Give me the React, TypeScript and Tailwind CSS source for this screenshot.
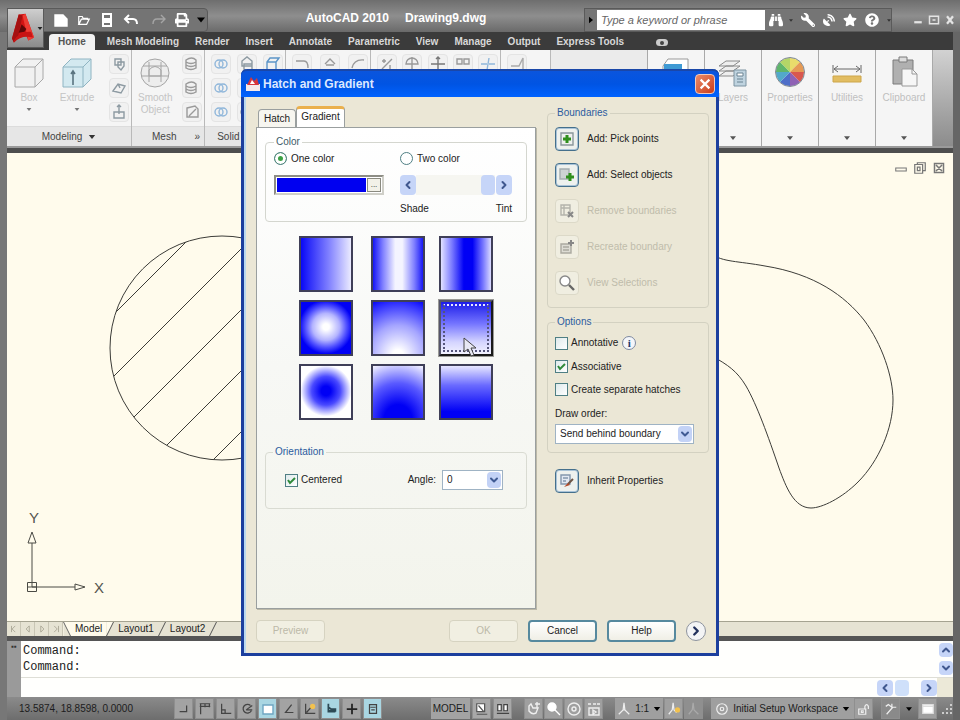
import { useState } from 'react'
import type { ReactNode } from 'react'
import { ChevronDown, ChevronLeft, ChevronRight, ChevronUp } from 'lucide-react'
import { FaBinoculars, FaPrint, FaQuestionCircle, FaSatelliteDish, FaStar, FaWrench } from 'react-icons/fa'

const MENU = ['Home', 'Mesh Modeling', 'Render', 'Insert', 'Annotate', 'Parametric', 'View', 'Manage', 'Output', 'Express Tools']

const B = '#0000f5'
const GRADIENTS = [
  { name: 'Linear', bg: `linear-gradient(90deg, ${B}, #8080ff 55%, #f4f4ff)` },
  { name: 'Cylinder', bg: `linear-gradient(90deg, ${B}, #8080ff 22%, #f4f4ff 45%, #f4f4ff 58%, #8080ff 80%, ${B})` },
  { name: 'Inverted cylinder', bg: `linear-gradient(90deg, #f4f4ff, #7a7aff 24%, ${B} 46%, ${B} 62%, #7a7aff 82%, #f4f4ff)` },
  { name: 'Spherical', bg: `radial-gradient(circle at 50% 48%, #ffffff 8%, #b4b4ff 34%, #5050ff 52%, ${B} 68%)` },
  { name: 'Hemispherical', bg: `radial-gradient(ellipse 105% 110% at 50% 100%, #ffffff 10%, #a5a5ff 50%, #2a2aff 88%, ${B})` },
  { name: 'Curved', bg: 'linear-gradient(180deg, #1414e6, #7474ff 42%, #d4d4ff 75%, #f8f8ff)' },
  { name: 'Inverted spherical', bg: `radial-gradient(circle at 50% 48%, ${B} 12%, #4a4aff 36%, #a5a5ff 50%, #ffffff 64%)` },
  { name: 'Inverted hemispherical', bg: `radial-gradient(ellipse 105% 110% at 50% 100%, ${B} 25%, #5a5aff 60%, #ffffff)` },
  { name: 'Inverted curved', bg: `linear-gradient(180deg, #f4f4ff, #6a6aff 38%, ${B} 85%)` },
]

type IconProps = { d: string; className?: string; children?: ReactNode }

function Icon({ d, className = 'size-4', children }: IconProps) {
  return (
    <svg viewBox="0 0 16 16" className={`shrink-0 ${className}`} fill="none" stroke="currentColor" strokeWidth="1.4" aria-hidden="true">
      <path d={d} />
      {children}
    </svg>
  )
}

function Caret({ className = 'h-1 w-2 text-black' }: { className?: string }) {
  return (
    <svg viewBox="0 0 8 5" className={`shrink-0 ${className}`} fill="currentColor" aria-hidden="true">
      <path d="M0 0h8L4 5z" />
    </svg>
  )
}

function AppLogo() {
  return (
    <svg viewBox="0 0 24 32" className="h-8 w-6" aria-hidden="true">
      <path d="M7 2 14 1 23 26 17 29 14 22 7 25 2 31 0 27z" fill="#d21414" />
      <path d="M7 2 11 3 6 27 2 31 0 27z" fill="#a51010" />
      <path d="M11 3 14 1 23 26 17 29z" fill="#ee3b33" />
      <path d="M10 12 15 17 13 20 7 21z" fill="#5e0808" />
      <path d="M2 29Q8 19 20 20L22 26Q10 23 2 31z" fill="#c81414" />
    </svg>
  )
}

function TitleBar() {
  return (
    <header className="flex h-8 items-end bg-gradient-to-b from-[#6e6e6e] via-[#8e8e8e] to-[#6a6a6a] pr-1">
      <div className="ml-9 flex h-6 w-[172px] items-center gap-2 rounded-r border border-[#5a5a5a] bg-[#747474] pr-1 pl-4 text-white">
        <button aria-label="New"><Icon d="M2 3h8l4 4v7H2z" className="size-4 fill-white" /></button>
        <button aria-label="Open"><Icon d="M2 13V4h4l1 2h5v2M2 13l3-6h9l-3 6z" className="size-3.5" /></button>
        <button aria-label="Save"><Icon d="M4 2h8v5H4zM4 10h8v4H4z" className="size-4 stroke-2"><path d="M3 8h10" /></Icon></button>
        <button aria-label="Undo"><Icon d="M6 3 2 7l4 4M2 7h8q4 0 4 5" className="size-4 stroke-2" /></button>
        <button aria-label="Redo" className="pl-1 text-[#a5a5a5]"><Icon d="M10 3l4 4-4 4M14 7H6q-4 0-4 5" className="size-4" /></button>
        <button aria-label="Print"><FaPrint className="size-3.5" /></button>
        <button aria-label="Customize"><Caret className="h-1.5 w-2 text-black" /></button>
      </div>
      <h1 className="flex flex-1 justify-center gap-4 self-center pt-1 text-xs font-bold text-white">
        <span>AutoCAD 2010</span>
        <span>Drawing9.dwg</span>
      </h1>
      <div className="mr-5 flex h-6 items-center border border-[#5a5a5a] bg-[#757575] pl-1 text-white">
        <svg viewBox="0 0 5 8" className="mr-1 h-2 w-1" aria-hidden="true"><path d="M0 0l5 4-5 4z" /></svg>
        <input aria-label="Search" placeholder="Type a keyword or phrase" className="h-5 w-[168px] bg-white px-1 text-[11px] italic text-gray-700 placeholder:text-[#666]" />
        <div className="flex items-center gap-2 pl-1">
          <button aria-label="Find" className="flex items-center gap-1.5"><FaBinoculars className="size-3.5" /><Caret className="h-[3px] w-1 text-[#333]" /></button>
          <button aria-label="Subscription"><FaWrench className="size-3.5 -scale-x-100" /></button>
          <button aria-label="Communication center"><FaSatelliteDish className="size-3" /></button>
          <button aria-label="Favorites"><FaStar className="size-3.5" /></button>
          <button aria-label="Help" className="flex items-center gap-2"><FaQuestionCircle className="size-3.5" /><Caret className="h-[3px] w-1 text-[#333]" /></button>
        </div>
      </div>
      <div className="flex h-6 items-center gap-1 text-[#e4e4e4]">
        <button aria-label="Minimize"><Icon d="M3 11h10" className="size-3 stroke-[3]" /></button>
        <button aria-label="Restore"><Icon d="M2 3h12v10H2zM6 8h4" className="size-3 stroke-2" /></button>
        <button aria-label="Close window"><Icon d="M4 3l8 10M12 3 4 13" className="size-3 stroke-[3]" /></button>
      </div>
    </header>
  )
}

function MenuTabs() {
  return (
    <nav className="flex h-[18px] items-end bg-[#3b3b3b] pl-[42px] text-[10px] leading-4 font-bold text-[#d8d8d8]">
      {MENU.map((m, i) => (
        <a key={m} href="#" className={i === 0 ? 'mr-1 h-4 rounded-t-sm bg-[#f2f2f2] px-[9px] text-[#555]' : 'px-2'}>{m}</a>
      ))}
      <button aria-label="Minimize ribbon" className="mb-1 ml-6 flex h-[7px] w-3 items-center justify-center rounded-sm bg-[#ccc]">
        <span className="size-1 rounded-full bg-[#444]" />
      </button>
    </nav>
  )
}

function Cube({ blue = false }: { blue?: boolean }) {
  return (
    <svg viewBox="0 0 30 32" className="h-8 w-8" fill={blue ? '#d3e9f0' : '#f1f1f1'} stroke={blue ? '#8fb4c2' : '#a8a8a8'} aria-hidden="true">
      <path d="M1 10 9 2h20v20l-8 8H1z" />
      <path d="M1 10h20v20M21 10l8-8" fill="none" />
      {blue && <path d="M11 14v14M9 17l2-3 2 3" stroke="#5a7480" strokeWidth="1.6" />}
    </svg>
  )
}

const S_COPY = 'M4 3h6v6H4zM7 6h6v4l-3 4-3-3z'
const S_PLANE = 'M2 11 7 4l7 2-4 7zM7 4l2 4'
const S_PULL = 'M3 8h10v6H3zM8 10V1M6 3l2-2 2 2'
const S_SPHERE = 'M2 4q6-4 10 0v8q-5 3-10 0zM2 6q5 3 10 0M2 9q5 3 10 0'
const S_UNION = 'M6 4a4 4 0 1 0 0 8a4 4 0 1 0 0-8M10 4a4 4 0 1 0 0 8a4 4 0 1 0 0-8'

function RibbonPanel({ label, className, children }: { label?: ReactNode; className: string; children?: ReactNode }) {
  return (
    <section className={`flex shrink-0 flex-col border-r border-[#b9b9b9] ${className}`}>
      <div className="flex flex-1 justify-between pt-1 pr-0.5 pl-1.5">{children}</div>
      <div className="flex h-5 items-center justify-center gap-1.5 border-t border-[#dcdcdc] bg-[#e6e6e6] text-[10px] text-[#444]">{label}</div>
    </section>
  )
}

function BigTool({ label, icon, menu }: { label: string; icon: ReactNode; menu?: boolean }) {
  return (
    <button className="flex flex-col items-center self-start text-[10px] leading-3 text-[#c4c4c4]">
      <span className="flex h-[38px] items-center">{icon}</span>
      <span className="w-min">{label}</span>
      {menu && <Caret className="mt-1 h-[3px] w-1.5 text-[#777]" />}
    </button>
  )
}

function ToolStack({ paths, color }: { paths: string[]; color: string }) {
  return (
    <div className={`flex flex-col gap-1 ${color}`}>
      {paths.map((d, i) => (
        <button key={i} aria-label="Tool" className="flex size-5 items-center justify-center rounded-sm border border-[#e4e4e4] bg-[#f1f1f1]">
          <Icon d={d} className="size-4" />
        </button>
      ))}
    </div>
  )
}

function SidePanel({ label, icon }: { label: string; icon: ReactNode }) {
  return (
    <section className="flex w-[57px] shrink-0 flex-col items-center border-r border-[#a9a9a9] pt-1 text-[10px] leading-3 text-[#bfbfbf]">
      <div className="flex h-9 items-center">{icon}</div>
      <span className="pt-0.5">{label}</span>
      <button aria-label={`${label} menu`} className="mt-auto flex h-4 items-center"><Caret className="h-1 w-1.5 text-[#555]" /></button>
    </section>
  )
}

function ColorWheel() {
  const colors = ['#e9dc6b', '#e59a55', '#d9584f', '#8f62b5', '#4e6ec8', '#52a9c9', '#5fb56b', '#b4d567']
  return (
    <svg viewBox="-16 -16 32 32" className="size-8" aria-hidden="true">
      {colors.map((c, i) => (
        <path key={c} d="M0 0V-14A14 14 0 0 1 9.9 -9.9z" fill={c} transform={`rotate(${i * 45})`} />
      ))}
      <circle r="14.5" fill="none" stroke="#7d8791" />
    </svg>
  )
}

function Ribbon() {
  return (
    <div className="flex h-[98px] overflow-hidden border-b-2 border-[#9a9a9a] bg-[#f5f5f5]">
      <RibbonPanel className="w-[125px]" label={<>Modeling <Caret className="h-1 w-2 text-[#333]" /></>}>
        <BigTool label="Box" icon={<Cube />} menu />
        <BigTool label="Extrude" icon={<Cube blue />} menu />
        <ToolStack paths={[S_COPY, S_PLANE, S_PULL]} color="text-[#8d9aa2]" />
      </RibbonPanel>
      <RibbonPanel className="w-[73px]" label={<span className="flex w-full justify-between pr-1 pl-5"><span>Mesh</span><span>»</span></span>}>
        <BigTool
          label="Smooth Object"
          icon={
            <svg viewBox="0 0 32 32" className="size-8" fill="#ededed" stroke="#a5a5a5" aria-hidden="true">
              <circle cx="16" cy="16" r="14" />
              <path d="M4 9h24M2 19h28M10 5v20M22 5v20M10 13q6-7 12 0v6H10z" />
            </svg>
          }
        />
        <ToolStack paths={[S_SPHERE, S_SPHERE, 'M3 4l8-2 3 3v8H3zM5 12l7-7']} color="text-[#9a9a9a]" />
      </RibbonPanel>
      <RibbonPanel className="w-[81px]" label="Solid Editing">
        <ToolStack paths={[S_UNION, S_UNION, S_UNION]} color="text-[#8fb6da]" />
        <ToolStack paths={['M3 5l5-4 5 4v5H3zM5 8h8v6H5z', S_COPY, S_UNION]} color="text-[#8d9aa2]" />
        <ToolStack paths={['M2 6l3-4h9l-3 4v8H2zM2 6h9', S_PLANE, S_PULL]} color="text-[#5c95c8]" />
      </RibbonPanel>
      <RibbonPanel className="w-[85px]" label="Draw">
        <ToolStack paths={['M2 5h8q4 0 4 7', S_PLANE, S_PULL]} color="text-[#999]" />
        <ToolStack paths={['M3 8l5-5 5 5M4 9h8', S_PLANE, S_PULL]} color="text-[#999]" />
        <ToolStack paths={['M2 12q2-9 12-8', S_PLANE, S_PULL]} color="text-[#999]" />
      </RibbonPanel>
      <RibbonPanel className="w-[130px]" label="Modify">
        <ToolStack paths={['M3 13 13 3M5 3v4M3 5h4M11 9v4', S_PLANE, S_PULL]} color="text-[#999]" />
        <ToolStack paths={['M8 1v14M2 8a6 6 0 0 1 12 0z', S_PLANE, S_PULL]} color="text-[#999]" />
        <ToolStack paths={['M8 1v14M1 8h14M6 3l2-2 2 2', S_PLANE, S_PULL]} color="text-[#777]" />
        <ToolStack paths={['M2 3h5v5H2zM9 3h5v5H9z', S_PLANE, S_PULL]} color="text-[#999]" />
        <ToolStack paths={['M1 8h6M9 8h6M9 2 7 14', S_PLANE, S_PULL]} color="text-[#8fb6da]" />
      </RibbonPanel>
      <RibbonPanel className="w-[50px]" label="Section">
        <ToolStack paths={['M2 10h8l4-8v12', S_PLANE, S_PULL]} color="text-[#aaa]" />
      </RibbonPanel>
      <div className="min-w-0 flex-1 border-r border-[#a9a9a9] bg-[#ebebeb]" />
      <SidePanel
        label="View"
        icon={<svg viewBox="0 0 32 32" className="size-8" fill="#fff" stroke="#999" aria-hidden="true"><path d="M3 10 8 3h20v20H3z" /><path d="M4 8h18v5H4z" fill="#3f9ad4" stroke="none" /></svg>}
      />
      <SidePanel
        label="Layers"
        icon={
          <svg viewBox="0 0 32 32" className="size-8" fill="#eee" stroke="#8a8a8a" aria-hidden="true">
            <path d="M2 20 9 15h14l-7 5zM2 15 9 10h14l-7 5zM2 10 9 5h14l-7 5z" />
            <path d="M17 14h12v16H17z" fill="#bfd3df" stroke="#7d93a1" />
            <path d="M20 17h6v3h-6zM20 23h6M20 26h6" fill="#fff" stroke="#6b8392" />
          </svg>
        }
      />
      <SidePanel label="Properties" icon={<ColorWheel />} />
      <SidePanel
        label="Utilities"
        icon={
          <svg viewBox="0 0 32 32" className="size-8" aria-hidden="true">
            <path d="M2 9v8M30 9v8M3 13h26M7 10l-4 3 4 3M25 10l4 3-4 3" fill="none" stroke="#666" />
            <path d="M2 20h28v6H2z" fill="#e2bd62" stroke="#cda64b" />
          </svg>
        }
      />
      <SidePanel
        label="Clipboard"
        icon={
          <svg viewBox="0 0 32 32" className="size-8" fill="#b0b0b0" stroke="#7a7a7a" aria-hidden="true">
            <path d="M5 4h20v24H5z" />
            <path d="M11 1h8v5h-8z" fill="#ddd" />
            <path d="M14 13h10l5 5v12H14z" fill="#f6f6f6" stroke="#999" />
            <path d="M24 13v5h5" fill="none" stroke="#999" />
          </svg>
        }
      />
      <div className="w-5 shrink-0 bg-gradient-to-b from-[#d2d2d2] to-[#8c8c8c]" />
    </div>
  )
}

function Drawing() {
  return (
    <svg viewBox="7 153 946 468" className="absolute inset-0 h-full w-full" fill="none" stroke="#3c3c38" aria-label="Drawing">
      <defs>
        <clipPath id="disc"><circle cx="222" cy="348" r="112" /></clipPath>
      </defs>
      <circle cx="222" cy="348" r="112" />
      <g clipPath="url(#disc)">
        {[428, 490, 551, 612, 673].map(c => (
          <path key={c} d={`M${c - 480} 480 ${c - 220} 220`} />
        ))}
      </g>
      <path d="M712 254C722 262 738 261 765 266C815 274 845 296 864 320C882 344 893 377 893 400C893 428 879 461 858 482C842 498 822 508 811 508C794 508 786 487 779 468C768 436 757 405 746 386C737 371 728 365 712 356" />
      <g stroke="#4a4a45">
        <path d="M27.500 582.500h9v9h-9zM32 587V543M32 587h43M28 543l4-11 4 11zM75 584l10 3-10 3z" />
        <path d="M28 587h9" />
      </g>
      <g fill="#55554f" stroke="none" fontSize="15">
        <text x="29" y="523">Y</text>
        <text x="94" y="593">X</text>
      </g>
    </svg>
  )
}

function CanvasArea() {
  return (
    <main className="relative min-h-[300px] flex-1 bg-[#fffbec]">
      <Drawing />
      <div className="absolute top-2 right-2 flex items-center gap-1.5 text-[#777]">
        <button aria-label="Minimize drawing"><Icon d="M1 8h14v4H1z" className="size-3" /></button>
        <button aria-label="Restore drawing"><Icon d="M2 4h9v10H2zM5 4V2h9v9h-3M5 7h3v4H5z" className="size-3.5" /></button>
        <button aria-label="Close drawing"><Icon d="M2 2h12v12H2zM4 4l8 8M12 4l-8 8" className="size-3 stroke-2" /></button>
      </div>
    </main>
  )
}

function LayoutTabs() {
  return (
    <div className="flex h-[15px] items-stretch border-t border-[#a5a391] bg-[#e6e3d3] text-[10px] leading-[14px] text-[#222]">
      {['M10 3 5 8l5 5M4 3v10', 'M10 3 5 8l5 5z', 'M6 3l5 5-5 5z', 'M5 3l5 5-5 5M12 3v10'].map((d, i) => (
        <button key={i} aria-label={`Scroll layouts ${i + 1}`} className="flex w-[14px] items-center justify-center border-r border-[#c9c6b5] text-[#a8a594]">
          <Icon d={d} className="size-2.5" />
        </button>
      ))}
      <div className="flex">
        <svg viewBox="0 0 7 14" className="h-3.5 w-2 bg-[#fffbec]" aria-hidden="true"><path d="M0 0v14h7z" fill="#e6e3d3" /><path d="M0 0l7 14" stroke="#666" /></svg>
        <a href="#" className="bg-[#fffbec] px-1">Model</a>
        <svg viewBox="0 0 7 14" className="mr-1 h-3.5 w-2" aria-hidden="true"><path d="M0 0h7L0 14z" fill="#fffbec" /><path d="M7 0 0 14" stroke="#555" /></svg>
        {['Layout1', 'Layout2'].map(l => (
          <a key={l} href="#" className="flex">
            {l}
            <svg viewBox="0 0 7 14" className="mr-1 ml-1 h-3.5 w-2" aria-hidden="true"><path d="M7 0 0 14" stroke="#555" /></svg>
          </a>
        ))}
      </div>
    </div>
  )
}

const SCROLL_BTN = 'flex items-center justify-center rounded-sm bg-[#c6d5f8] text-[#40588f]'

function CommandLine() {
  return (
    <div className="flex h-14 bg-[#fffffd]">
      <div className="w-3.5 shrink-0 bg-[#9a9a9a] pt-1 text-center text-[8px] leading-[4px] text-[#333]">▪▪</div>
      <div className="flex min-w-0 flex-1 flex-col">
        <div className="flex h-[37px] border-b border-[#deded6]">
          <div className="flex-1 pt-0.5 pl-0.5 font-['Liberation_Mono',monospace] text-xs leading-4 text-[#222]">
            <p>Command:</p>
            <p>Command:</p>
          </div>
          <div className="flex w-3.5 flex-col justify-between py-0.5">
            <button aria-label="Scroll up" className={`${SCROLL_BTN} h-3.5`}><ChevronUp className="size-3" strokeWidth={4} /></button>
            <button aria-label="Scroll down" className={`${SCROLL_BTN} h-3.5`}><ChevronDown className="size-3" strokeWidth={4} /></button>
          </div>
        </div>
        <div className="flex flex-1">
          <input aria-label="Command input" className="min-w-0 flex-1 font-['Liberation_Mono',monospace] text-xs outline-none" />
          <div className="flex w-[60px] items-center py-px">
            <button aria-label="Scroll left" className={`${SCROLL_BTN} h-4 w-4`}><ChevronLeft className="size-3" strokeWidth={4} /></button>
            <span className="ml-0.5 h-4 w-3.5 rounded-sm bg-[#cfe0fa]" />
            <button aria-label="Scroll right" className={`${SCROLL_BTN} ml-auto h-4 w-4`}><ChevronRight className="size-3" strokeWidth={4} /></button>
          </div>
          <div className="w-4 bg-[#ece9d8]" />
        </div>
      </div>
    </div>
  )
}

const TOGGLES = [
  { name: 'Snap', d: 'M11 4v7H3M4 11h2', on: false },
  { name: 'Grid', d: 'M2 2h12M2 5h12M3 2v12M8 2v4M13 2v4', on: false },
  { name: 'Ortho', d: 'M3 2v11h11M3 9h4v4', on: false },
  { name: 'Polar', d: 'M12 4a5 5 0 1 0 1 6M7 9l7-5M7 9h7', on: false },
  { name: 'Object snap', d: 'M3 4h10v9H3z', on: true },
  { name: 'Object snap tracking', d: 'M11 3 4 12h9', on: false },
  { name: 'Dynamic UCS', d: 'M3 2v11h11M4 12l7-8', on: false },
  { name: 'Dynamic input', d: 'M5 2v9h8M5 6l3 2h5v2H6', on: true },
  { name: 'Lineweight', d: 'M8 2v12M2 8h12M8 8h6', on: false },
  { name: 'Quick properties', d: 'M4 3h8v10H4zM5 6h6M6 9h4', on: true },
]

const TOGGLE_ICON: Record<string, string> = {
  'Object snap': 'size-4 fill-white stroke-[#6fa6c2]',
  'Lineweight': 'size-3.5 stroke-2 text-[#222]',
  'Dynamic input': 'size-3.5 stroke-2 text-[#2d4a55]',
}

const ST_BTN = 'flex h-[21px] w-[19px] shrink-0 items-center justify-center border border-[#8f8f8f]'

function StatusBar() {
  return (
    <footer className="flex h-[23px] items-center bg-gradient-to-b from-[#8b8b8b] to-[#6d6d6d] text-[10px] text-[#1c1c1c]">
      <span className="w-[167px] shrink-0 pl-3">13.5874, 18.8598, 0.0000</span>
      <div className="flex gap-0.5">
        {TOGGLES.map(t => (
          <button key={t.name} aria-label={t.name} aria-pressed={t.on} className={`${ST_BTN} ${t.on ? 'bg-[#a9d6e2]' : 'bg-[#a3a3a3]'} text-[#444]`}>
            <Icon d={t.d} className={TOGGLE_ICON[t.name] ?? 'size-3.5'}>
              {t.name === 'Dynamic UCS' && <circle cx="11" cy="5" r="3" fill="#f2c14e" stroke="none" />}
            </Icon>
          </button>
        ))}
      </div>
      <div className="ml-auto flex items-center gap-0.5">
        <button className="h-[21px] bg-[#a3a3a3] px-0.5">MODEL</button>
        <button aria-label="Quick view layouts" className={`${ST_BTN} bg-[#a8a8a8]`}><Icon d="M2 2h9v9H2zM2 14h12M4 4l6 7" className="size-3.5 fill-white text-[#555]" /></button>
        <button aria-label="Quick view drawings" className={`${ST_BTN} bg-[#a8a8a8]`}><Icon d="M2 3h4v7H2zM9 3h4v7H9zM1 13h14" className="size-3.5 fill-white text-[#444]" /></button>
      </div>
      <div className="ml-3 flex items-center gap-px">
        {[
          { name: 'Pan', d: 'M3 5v5q3 4 7 2l2-5H7L5 3zM11 1v6M9 3h5' },
          { name: 'Zoom', d: 'M6 2a4 4 0 1 0 0 8a4 4 0 1 0 0-8M9 9l5 5' },
          { name: 'Steering wheel', d: 'M8 2a6 6 0 1 0 0 12a6 6 0 1 0 0-12M8 6a2 2 0 1 0 0 4a2 2 0 1 0 0-4' },
          { name: 'Show motion', d: 'M3 7h10v7H3zM2 3h3M7 3h3M11 3h3M7 9l3 2-3 2z' },
        ].map(t => (
          <button key={t.name} aria-label={t.name} className={`${ST_BTN} bg-[#9f9f9f] text-[#eee]`}>
            <Icon d={t.d} className={t.name === 'Zoom' ? 'size-4 fill-white stroke-white' : 'size-4'} />
          </button>
        ))}
      </div>
      <div className="ml-3 flex items-center gap-px">
        <button className="flex h-[21px] items-center gap-1 bg-[#9f9f9f] px-0.5">
          <Icon d="M8 1 7 9 2 14M8 1l1 8 5 5M7 9h2" className="size-3.5 text-[#eee]" /> 1:1 <Caret />
        </button>
        <button aria-label="Annotation visibility" className={`${ST_BTN} bg-[#9f9f9f] text-[#eee]`}>
          <Icon d="M7 1 6 9 2 14M7 1l1 8 3 3" className="size-3.5"><circle cx="12" cy="9" r="3" fill="#f2c14e" stroke="none" /></Icon>
        </button>
        <button aria-label="Auto scale" className={`${ST_BTN} bg-[#8f8f8f] text-[#aaa]`}><Icon d="M7 1 6 9 2 14M7 1l1 8 5 5" className="size-3.5" /></button>
      </div>
      <div className="ml-2 flex items-center">
        <button className="flex h-[21px] items-center gap-1 bg-[#9f9f9f] px-1">
          <Icon d="M8 2a6 6 0 1 0 0 12a6 6 0 1 0 0-12M8 6a2 2 0 1 0 0 4a2 2 0 1 0 0-4" className="size-3.5 text-[#eee]" />
          Initial Setup Workspace <Caret />
        </button>
        <button aria-label="Lock toolbars" className={`${ST_BTN} bg-[#9f9f9f] text-[#eee]`}><Icon d="M2 8h8v6H2zM9 8V5q2-4 4 0v3M5 10h2v2H5z" className="size-3.5" /></button>
        <button aria-label="Hardware" className={`${ST_BTN} ml-2 bg-[#8a8a8a] text-[#eee]`}><Icon d="M3 14l7-8M9 2v4h5M2 5l3-2 4 3" className="size-3.5" /></button>
        <button aria-label="Status menu" className="mx-1.5"><Caret className="h-1 w-1.5 text-black" /></button>
        <button aria-label="Clean screen" className={`${ST_BTN} bg-[#9f9f9f] text-[#eee]`}><Icon d="M2 3h12v10H2zM2 5h12" className="size-3.5 fill-white stroke-[#ddd]" /></button>
        <svg viewBox="0 0 12 12" className="ml-1 size-3 text-[#ccc]" fill="currentColor" aria-hidden="true"><path d="M9 1h2v2H9zM9 5h2v2H9zM5 5h2v2H5zM9 9h2v2H9zM5 9h2v2H5zM1 9h2v2H1z" /></svg>
      </div>
    </footer>
  )
}

function Check({ label, checked, className = '' }: { label: string; checked?: boolean; className?: string }) {
  return (
    <label className={`flex items-center gap-[3px] ${className}`}>
      <span className="relative flex">
        <input type="checkbox" defaultChecked={checked} className="peer size-[13px] appearance-none border border-[#4f7f84] bg-gradient-to-br from-[#dfeaec] to-white" />
        <svg viewBox="0 0 13 13" className="pointer-events-none absolute inset-0 hidden size-[13px] text-[#2f8a3a] peer-checked:block" fill="none" stroke="currentColor" strokeWidth="2" aria-hidden="true">
          <path d="M3 6l2 3 5-5" />
        </svg>
      </span>
      {label}
    </label>
  )
}

function Radio({ label, value, current, onPick }: { label: string; value: string; current: string; onPick: (v: string) => void }) {
  return (
    <label className="flex items-center gap-1">
      <input
        type="radio"
        name="colors"
        checked={current === value}
        onChange={() => onPick(value)}
        className="size-[13px] appearance-none rounded-full border border-[#4f7f84] bg-white checked:bg-[#3ba144] checked:shadow-[inset_0_0_0_3px_white]"
      />
      {label}
    </label>
  )
}

function Dropdown({ id, options, className }: { id: string; options: string[]; className: string }) {
  return (
    <div className={`relative h-5 border border-[#9fb3c4] bg-white ${className}`}>
      <select id={id} className="h-full w-full appearance-none bg-transparent px-1 text-[10px] leading-4 outline-none">
        {options.map(o => <option key={o}>{o}</option>)}
      </select>
      <span className="pointer-events-none absolute inset-y-px right-px flex w-3.5 items-center justify-center rounded-sm bg-[#c3d2f6] text-[#3f5a93]">
        <ChevronDown className="size-3" strokeWidth={4} />
      </span>
    </div>
  )
}

function ToolRow({ label, disabled, children }: { label: string; disabled?: boolean; children: ReactNode }) {
  return (
    <button disabled={disabled} className={`flex items-center gap-2 text-left ${disabled ? 'text-[#bfbcab]' : 'text-[#222]'}`}>
      <span className={`flex size-6 items-center justify-center rounded-sm border ${disabled ? 'border-[#dcd9c8] bg-[#f0eee1]' : 'border-[#45708c] bg-[#eef1ee] shadow-[inset_0_0_0_1px_#a9c3d8]'}`}>
        {children}
      </span>
      {label}
    </button>
  )
}

const LEGEND = 'px-0.5 leading-3 text-[#2c5c9e]'
const GROUP = 'rounded border'
const PUSH = 'h-[22px] w-[69px] rounded'

function GradientPage() {
  const [mode, setMode] = useState('one')
  const [picked, setPicked] = useState(5)
  return (
    <div className="flex-1 border border-[#9a9f9f] bg-gradient-to-b from-white via-[#f7f8f5] to-[#f3f4ec] px-2 pt-2 shadow-[1px_1px_0_#bcb9a8]">
      <fieldset className={`${GROUP} h-[86px] border-[#d4d6cf] px-2`}>
        <legend className="px-0.5 leading-3 text-[#3c5a66]">Color</legend>
        <div className="grid grid-cols-[126px_112px] gap-y-2.5 pt-1">
          <Radio label="One color" value="one" current={mode} onPick={setMode} />
          <Radio label="Two color" value="two" current={mode} onPick={setMode} />
          <div className="flex h-5 w-[110px] border-2 border-[#8d8d85] border-r-[#cfcfc8] border-b-[#cfcfc8] bg-white p-px">
            <span className="flex-1 bg-[#0000f0]" />
            <button aria-label="Choose color" className="ml-px w-3.5 border border-[#8a8a80] bg-[#f2f1e8] text-[8px] leading-[10px]">...</button>
          </div>
          <div className="flex h-5">
            <button aria-label="More shade" className={`${SCROLL_BTN} w-4`}><ChevronLeft className="size-3" strokeWidth={4} /></button>
            <input
              type="range"
              aria-label="Shade and tint"
              defaultValue={100}
              className="h-5 min-w-0 flex-1 appearance-none bg-[#f6f6f1] [&::-webkit-slider-thumb]:h-5 [&::-webkit-slider-thumb]:w-3.5 [&::-webkit-slider-thumb]:appearance-none [&::-webkit-slider-thumb]:rounded-sm [&::-webkit-slider-thumb]:bg-[#c6d5f8]"
            />
            <button aria-label="More tint" className={`${SCROLL_BTN} ml-px w-4`}><ChevronRight className="size-3" strokeWidth={4} /></button>
          </div>
        </div>
        <div className="ml-[126px] flex w-[112px] justify-between pt-2">
          <span>Shade</span>
          <span>Tint</span>
        </div>
      </fieldset>

      <div className="mt-3.5 ml-[34px] grid grid-cols-[72px_68px_56px] gap-y-2">
        {GRADIENTS.map((g, i) => (
          <button
            key={g.name}
            aria-label={g.name}
            onClick={() => setPicked(i)}
            className={`h-14 w-[54px] border-2 ${i === picked ? 'border-[#55556a] border-r-[#1a1a1a] border-b-[#1a1a1a] p-0.5 outline-1 outline-[#9a9a96]' : 'border-[#3f3f58]'}`}
            style={{ background: g.bg, backgroundOrigin: 'border-box' }}
          >
            {i === picked && <span className="block h-full border-2 border-dotted border-[#55557a] border-t-[#e8e8ff]" />}
          </button>
        ))}
      </div>

      <fieldset className={`${GROUP} mt-[26px] h-[63px] border-[#d9dbd2] pr-[23px] pl-[19px]`}>
        <legend className={`-ml-3 ${LEGEND}`}>Orientation</legend>
        <div className="flex items-center justify-between pt-3">
          <Check label="Centered" checked />
          <div className="flex items-center gap-1.5">
            <label htmlFor="angle">Angle:</label>
            <Dropdown id="angle" options={['0', '15', '30', '45']} className="w-[61px]" />
          </div>
        </div>
      </fieldset>
    </div>
  )
}

function BoundaryColumn() {
  return (
    <div className="w-[162px] text-[#222]">
      <fieldset className={`${GROUP} h-[201px] border-[#d3d1c1] pl-[7px]`}>
        <legend className={LEGEND}>Boundaries</legend>
        <div className="flex flex-col gap-3 pt-2">
          <ToolRow label="Add: Pick points">
            <Icon d="M2 2h12v12H2z" className="size-4 text-[#8a979c]"><path d="M8 4v8M4 8h8" stroke="#2f8f1c" strokeWidth="3" /></Icon>
          </ToolRow>
          <ToolRow label="Add: Select objects">
            <Icon d="M1 2h9v10H1z" className="size-4 fill-[#cdd3d3] text-[#a4adb0]"><path d="M11 6v8M7 10h8" stroke="#2f8f1c" strokeWidth="3" /></Icon>
          </ToolRow>
          <ToolRow label="Remove boundaries" disabled>
            <Icon d="M2 2h9v10H2zM5 2v10M2 5h9" className="size-4 text-[#b4b4ac]"><path d="M9 9l5 5M14 9l-5 5" stroke="#888" strokeWidth="2" /></Icon>
          </ToolRow>
          <ToolRow label="Recreate boundary" disabled>
            <Icon d="M2 5h10v9H2zM4 8h6M4 11h6" className="size-4 fill-[#dddcd4] text-[#aaa9a0]"><path d="M12 1v6M9 4h6" stroke="#888" strokeWidth="2" /></Icon>
          </ToolRow>
          <ToolRow label="View Selections" disabled>
            <Icon d="M6 1a5 5 0 1 0 0 10a5 5 0 1 0 0-10" className="size-4 fill-white text-[#888]"><path d="M10 10l5 5" stroke="#666" strokeWidth="2.4" /></Icon>
          </ToolRow>
        </div>
      </fieldset>

      <fieldset className={`${GROUP} mt-2 h-[137px] border-[#d3d1c1] pl-[7px]`}>
        <legend className={LEGEND}>Options</legend>
        <div className="flex items-center gap-1 pt-2">
          <Check label="Annotative" />
          <button aria-label="About annotative" className="size-3.5 rounded-full border border-[#7d89a0] bg-[#f4f6fa] font-['Liberation_Serif',serif] text-[11px] leading-3 font-bold text-[#223a6b]">i</button>
        </div>
        <Check label="Associative" checked className="pt-2.5" />
        <Check label="Create separate hatches" className="pt-2.5" />
        <label htmlFor="draw-order" className="block pt-3 pb-1 leading-3">Draw order:</label>
        <Dropdown id="draw-order" options={['Send behind boundary', 'Bring in front of boundary']} className="w-[139px]" />
      </fieldset>

      <div className="mt-4 pl-2">
        <ToolRow label="Inherit Properties">
          <Icon d="M2 2h9v9H2zM4 5h5M4 8h3" className="size-4 fill-[#e2e8f2] text-[#8496ad]"><path d="M14 6 9 11" stroke="#6e5545" strokeWidth="2" /><path d="M9 10l-4 4 6-2z" fill="#b34a28" stroke="none" /></Icon>
        </ToolRow>
      </div>
    </div>
  )
}

function HatchDialog() {
  return (
    <div role="dialog" aria-label="Hatch and Gradient" className="absolute inset-x-0 top-[69px] mx-auto flex h-[587px] w-[478px] flex-col rounded-t-md border-x-[3px] border-b-[3px] border-[#1c3f9e] bg-[#ebe7d6] text-[10px] leading-3 text-[#222]">
      <div className="-mx-[3px] flex h-7 shrink-0 items-center rounded-t-md border-t-2 border-[#1a47a8] bg-gradient-to-b from-[#0b55dd] via-[#0054e3] to-[#0062ff] px-1">
        <svg viewBox="0 0 16 16" className="size-4" aria-hidden="true">
          <path d="M1 8h14v7H1z" fill="#f4e9ea" />
          <path d="M2 9 6 1l3 4 3-3 2 7z" fill="#d6353c" />
          <path d="M5 8l2-4 3 4z" fill="#fff" />
        </svg>
        <h2 className="pl-0.5 text-xs font-bold text-[#dce8ff]">Hatch and Gradient</h2>
        <button aria-label="Close" className="ml-auto flex size-5 items-center justify-center rounded-sm border border-[#f3c9b9] bg-gradient-to-br from-[#e98a68] to-[#c93a15] text-white">
          <Icon d="M3 3l10 10M13 3 3 13" className="size-3.5 stroke-[2.5]" />
        </button>
      </div>

      <div className="flex flex-1 gap-[11px] border-l-2 border-[#b9d8ef] pt-2.5 pl-2.5">
        <div className="flex w-[280px] flex-col">
          <div role="tablist" className="flex h-5 items-end pl-0.5">
            <button role="tab" aria-selected="false" className="h-[18px] w-[38px] rounded-t-sm border border-b-0 border-[#9a9f9f] bg-[#f7f6f0]">Hatch</button>
            <button role="tab" aria-selected="true" className="-mb-px h-[22px] w-[49px] rounded-t-sm border border-t-[3px] border-b-0 border-[#9a9f9f] border-t-[#eab04d] bg-white pb-1">Gradient</button>
          </div>
          <GradientPage />
        </div>
        <BoundaryColumn />
      </div>

      <div className="flex h-11 shrink-0 items-center border-l-2 border-[#b9d8ef] pl-2.5">
        <button disabled className={`${PUSH} border border-[#d6d3c1] bg-[#f1efe2] text-[#bcb9a8]`}>Preview</button>
        <div className="ml-auto flex items-center gap-2.5 pr-2.5">
          <button disabled className={`${PUSH} border border-[#d6d3c1] bg-[#f1efe2] text-[#bcb9a8]`}>OK</button>
          <button className={`${PUSH} border-2 border-[#56899e] bg-gradient-to-b from-white to-[#f0efe6]`}>Cancel</button>
          <button className={`${PUSH} border-2 border-[#56899e] bg-gradient-to-b from-white to-[#f0efe6]`}>Help</button>
          <button aria-label="More options" className="flex size-5 items-center justify-center rounded-full border border-[#8d939e] bg-[#f3f4f5] text-[#22315c]">
            <ChevronRight className="size-3.5" strokeWidth={4} />
          </button>
        </div>
      </div>
      <svg viewBox="0 0 14 20" className="pointer-events-none absolute top-[268px] left-[219px] h-5 w-3.5" fill="#e8e8f4" stroke="#444" aria-hidden="true">
        <path d="M1 1v14l4-3 3 7 3-1-3-7h5z" />
      </svg>
    </div>
  )
}

export default function App() {
  return (
    <div className="relative flex min-h-screen flex-col bg-[#5c5c5c] font-['Liberation_Sans',Arial,sans-serif]">
      <TitleBar />
      <div className="relative z-0 flex flex-1 flex-col border-r-[7px] border-l-[7px] border-l-[#777] border-r-[#666]">
        <MenuTabs />
        <Ribbon />
        <div className="h-[5px] bg-[#4e4e4e]" />
        <CanvasArea />
        <LayoutTabs />
        <div className="h-[5px] bg-[#555]" />
        <CommandLine />
        <StatusBar />
      </div>
      <button aria-label="Application menu" className="absolute top-2 left-[7px] flex h-10 w-[37px] items-center gap-0.5 border border-[#5a5a5a] bg-gradient-to-b from-[#cfcfcf] to-[#8b8b8b] pl-1">
        <AppLogo />
        <Caret className="h-[3px] w-1.5 text-[#222]" />
      </button>
      <HatchDialog />
    </div>
  )
}
